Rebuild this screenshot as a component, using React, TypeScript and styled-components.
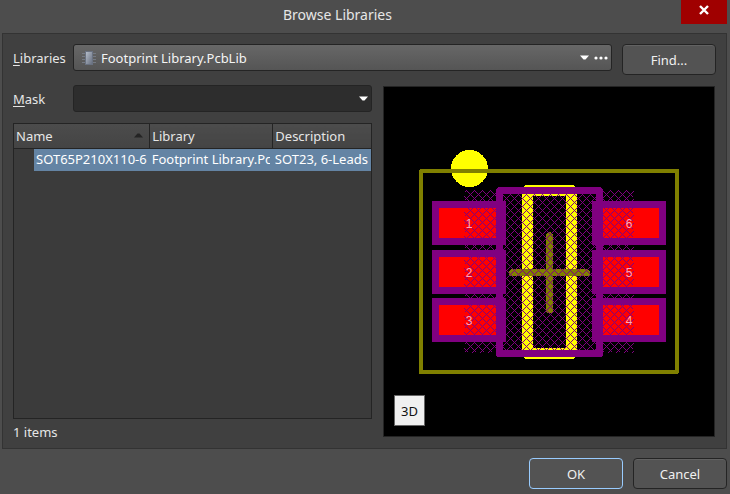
import React from "react";
import styled, { createGlobalStyle } from "styled-components";

const Global = createGlobalStyle`
  * { box-sizing: border-box; }
  body { margin: 0; background: #4d4d4d; }
  body, button, input, select, table {
    font-family: "Noto Sans", "Open Sans", sans-serif;
    font-size: 13px;
    line-height: 18px;
    color: #e6e6e6;
  }
`;

const Dialog = styled.main`
  min-height: 100vh;
  display: flex;
  flex-direction: column;
  padding: 0 3px 5px 2px;
  background: #4d4d4d;
`;

const TitleBar = styled.header`
  display: grid;
  grid-template-columns: 1fr 46px;
  height: 33px;
`;

const Title = styled.h1`
  margin: 0;
  padding: 5px 8px 0 0;
  font-size: 14px;
  line-height: 20px;
  font-weight: 400;
  text-align: center;
`;

const CloseButton = styled.button`
  display: grid;
  place-items: center;
  height: 24px;
  padding: 0 0 4px;
  border: 0;
  background: #a00000;
`;

const Panel = styled.section`
  flex: 1;
  display: flex;
  flex-direction: column;
  gap: 10px;
  padding: 10px 10px 7px;
  border: 1px solid #333;
  background: #404040;
`;

const LibraryRow = styled.div`
  display: flex;
  align-items: flex-start;
  gap: 10px;
`;

const Field = styled.div<{ $grow?: boolean }>`
  flex: ${(p) => (p.$grow ? "1" : "none")};
  display: flex;
  align-items: center;
`;

const Label = styled.label`
  flex: 0 0 60px;
  u { text-underline-offset: 2px; }
`;

const ComboBox = styled.div<{ $raised?: boolean }>`
  flex: 1;
  min-width: 0;
  height: 27px;
  display: flex;
  align-items: center;
  gap: 5px;
  padding: 0 3px 0 ${(p) => (p.$raised ? "8px" : "4px")};
  border: 1px solid #242424;
  border-radius: 3px;
  background: ${(p) => (p.$raised ? "linear-gradient(#676767, #555)" : "#2d2d2d")};
`;

const LibrarySelect = styled.select`
  flex: 1;
  min-width: 0;
  appearance: none;
  border: 0;
  padding: 0;
  background: transparent;
  color: #f4f4f4;
`;

const MaskInput = styled.input`
  flex: 1;
  min-width: 0;
  border: 0;
  padding: 0;
  background: transparent;
`;

const IconButton = styled.button`
  display: grid;
  place-items: center;
  padding: 0;
  border: 0;
  background: transparent;
`;

const PushButton = styled.button<{ $primary?: boolean }>`
  width: 94px;
  height: 31px;
  padding: 0;
  border: 1px solid ${(p) => (p.$primary ? "#99ccff" : "#242424")};
  border-radius: 4px;
  background: #535353;
  box-shadow: ${(p) => (p.$primary ? "none" : "inset 0 1px #626262")};
  color: #f0f0f0;
`;

const Content = styled.div`
  flex: 1;
  display: grid;
  grid-template-columns: minmax(0, 359fr) minmax(0, 332fr);
  gap: 11px;
  padding-right: 1px;
`;

const ListColumn = styled.div`
  display: flex;
  flex-direction: column;
`;

const ListFrame = styled.div`
  flex: 1;
  margin-top: 11px;
  border: 1px solid #242424;
  background: #3b3b3b;
  overflow: hidden;
`;

const ItemTable = styled.table`
  width: 100%;
  table-layout: fixed;
  border-collapse: collapse;
`;

const HeaderCell = styled.th<{ $width?: string }>`
  width: ${(p) => p.$width ?? "auto"};
  height: 24px;
  padding: 0 2px;
  border-bottom: 1px solid #242424;
  background: linear-gradient(#4c4c4c, #444);
  font-weight: 400;
  text-align: left;
  white-space: nowrap;
  & + & { border-left: 1px solid #242424; }
`;

const HeaderContent = styled.span`
  display: flex;
  align-items: center;
  justify-content: space-between;
  padding-right: 4px;
`;

const Cell = styled.td<{ $indent?: boolean }>`
  height: 22px;
  padding: 0 0 0 ${(p) => (p.$indent ? "20px" : "2px")};
  background: ${(p) => (p.$indent ? "linear-gradient(90deg, transparent 20px, #6484a4 20px)" : "#6484a4")};
  color: #fff;
  overflow: hidden;
  white-space: nowrap;
`;

const CellText = styled.span<{ $inset?: boolean }>`
  display: block;
  height: 22px;
  padding-left: ${(p) => (p.$inset ? "2px" : "0")};
  margin-right: 3px;
  line-height: 20px;
  overflow: hidden;
  td:last-child > & { margin-right: 0; }
`;

const Count = styled.p`
  margin: 0;
  padding-top: 4px;
  line-height: 18px;
`;

const Preview = styled.div`
  position: relative;
  margin: 1px 0 4px;
  border: 1px solid #242424;
  background: #000;
  svg { display: block; width: 100%; height: auto; }
`;

const ViewButton = styled.button`
  position: absolute;
  left: 10px;
  bottom: 10px;
  width: 31px;
  height: 31px;
  padding: 0;
  border: 1px solid #666;
  background: #f0f0f0;
  color: #111;
`;

const Footer = styled.footer`
  display: flex;
  justify-content: flex-end;
  gap: 10px;
  padding-top: 9px;
`;

const Caret = () => (
  <svg width="9" height="5" viewBox="0 0 9 5" aria-hidden="true">
    <path d="M0 0.5H9L5.5 4.5H3.5Z" fill="#fff" />
  </svg>
);

const ChipIcon = () => (
  <svg width="14" height="14" viewBox="0 0 14 14" shapeRendering="crispEdges" aria-hidden="true">
    <defs>
      <linearGradient id="chip" x2="1" y2="1">
        <stop stopColor="#b4bcc8" />
        <stop offset="1" stopColor="#687080" />
      </linearGradient>
    </defs>
    <path d="M0 2.5H14M0 5.5H14M0 8.5H14M0 11.5H14" stroke="#757a83" />
    <rect x="3" width="8" height="14" fill="#697180" />
    <rect x="4" y="1" width="6" height="12" fill="url(#chip)" />
  </svg>
);

const PADS = [
  { y: 201, left: "1", right: "6" },
  { y: 250, left: "2", right: "5" },
  { y: 298, left: "3", right: "4" },
];

const HATCH = { x: 464, y: 190, width: 170, height: 163, period: 8 };

/* Both families of diagonals, each clipped to the hatched rectangle. */
const hatchPath = (() => {
  const { x, y, width, height, period } = HATCH;
  const lines: string[] = [];
  for (let start = 2 - Math.ceil(height / period) * period; start < width + height; start += period) {
    const down0 = Math.max(0, -start);
    const down1 = Math.min(height, width - start);
    if (down1 > down0) {
      lines.push(`M${x + start + down0 + 0.5} ${y + down0 + 0.5}L${x + start + down1 - 0.5} ${y + down1 - 0.5}`);
    }
    const up0 = Math.max(0, start - width + 1);
    const up1 = Math.min(height, start);
    if (up1 > up0) {
      lines.push(`M${x + start - up0 + 0.5} ${y + up0 + 0.5}L${x + start - up1 + 0.5} ${y + up1 + 0.5}`);
    }
  }
  return lines.join("");
})();

const Footprint = () => (
  <svg viewBox="384 87 330 349" role="img" aria-label="Footprint preview" shapeRendering="crispEdges">
    <circle cx="469.5" cy="168.5" r="18.5" fill="#ff0" />
    <rect x="421" y="171" width="256" height="201" fill="none" stroke="#808000" strokeWidth="4" strokeLinejoin="round" />
    <rect x="527.5" y="190.5" width="44" height="163" fill="none" stroke="#ff0" strokeWidth="11" strokeLinejoin="round" />
    <path d="M549.5 235.5V309.5M512.5 272.5H586.5" stroke="#808000" strokeWidth="7" strokeLinecap="round" />
    {PADS.map((pad) => (
      <g key={pad.y} fill="#f00">
        <rect x="439" y={pad.y + 7} width="57" height="30" />
        <rect x="603" y={pad.y + 7} width="56" height="30" />
      </g>
    ))}
    <path d={hatchPath} fill="none" stroke="#800080" />
    <rect x="499.5" y="190.5" width="100" height="163" fill="none" stroke="#800080" strokeWidth="7" strokeLinejoin="round" />
    {PADS.map((pad) => (
      <g key={pad.y}>
        <path
          fill="#800080"
          fillRule="evenodd"
          d={`M432 ${pad.y}h74v44h-74zM439 ${pad.y + 7}v30h57v-30zM592 ${pad.y}h74v44h-74zM603 ${pad.y + 7}v30h56v-30z`}
        />
        <g fill="#ffa8b8" fontFamily="Liberation Sans, sans-serif" fontSize="12" textAnchor="middle">
          <text x="469" y={pad.y + 27}>{pad.left}</text>
          <text x="629" y={pad.y + 27}>{pad.right}</text>
        </g>
      </g>
    ))}
  </svg>
);

export default function App() {
  return (
    <>
      <Global />
      <Dialog>
        <TitleBar>
          <Title>Browse Libraries</Title>
          <CloseButton aria-label="Close">
            <svg width="10" height="10" viewBox="0 0 10 10" aria-hidden="true">
              <path d="M1 1L9 9M9 1L1 9" stroke="#fff" strokeWidth="2.4" />
            </svg>
          </CloseButton>
        </TitleBar>
        <Panel>
          <LibraryRow>
            <Field $grow>
              <Label htmlFor="library"><u>L</u>ibraries</Label>
              <ComboBox $raised>
                <ChipIcon />
                <LibrarySelect id="library">
                  <option>Footprint Library.PcbLib</option>
                </LibrarySelect>
                <Caret />
                <IconButton aria-label="More libraries">
                  <svg width="14" height="4" viewBox="0 0 14 4" fill="#fff" aria-hidden="true">
                    <circle cx="2" cy="2" r="1.6" />
                    <circle cx="7" cy="2" r="1.6" />
                    <circle cx="12" cy="2" r="1.6" />
                  </svg>
                </IconButton>
              </ComboBox>
            </Field>
            <PushButton>Find...</PushButton>
          </LibraryRow>
          <Content>
            <ListColumn>
              <Field>
                <Label htmlFor="mask"><u>M</u>ask</Label>
                <ComboBox>
                  <MaskInput id="mask" />
                  <IconButton aria-label="Mask history"><Caret /></IconButton>
                </ComboBox>
              </Field>
              <ListFrame>
                <ItemTable>
                  <thead>
                    <tr>
                      <HeaderCell $width="38%">
                        <HeaderContent>
                          Name
                          <svg width="9" height="5" viewBox="0 0 9 5" aria-hidden="true">
                            <path d="M0 4.5L3.5 0.5H5.5L9 4.5Z" fill="#242424" />
                          </svg>
                        </HeaderContent>
                      </HeaderCell>
                      <HeaderCell $width="34.5%">Library</HeaderCell>
                      <HeaderCell>Description</HeaderCell>
                    </tr>
                  </thead>
                  <tbody>
                    <tr>
                      <Cell $indent><CellText $inset>SOT65P210X110-6N</CellText></Cell>
                      <Cell><CellText>Footprint Library.PcbLib</CellText></Cell>
                      <Cell><CellText>SOT23, 6-Leads</CellText></Cell>
                    </tr>
                  </tbody>
                </ItemTable>
              </ListFrame>
              <Count>1 items</Count>
            </ListColumn>
            <Preview>
              <Footprint />
              <ViewButton>3D</ViewButton>
            </Preview>
          </Content>
        </Panel>
        <Footer>
          <PushButton $primary>OK</PushButton>
          <PushButton>Cancel</PushButton>
        </Footer>
      </Dialog>
    </>
  );
}
